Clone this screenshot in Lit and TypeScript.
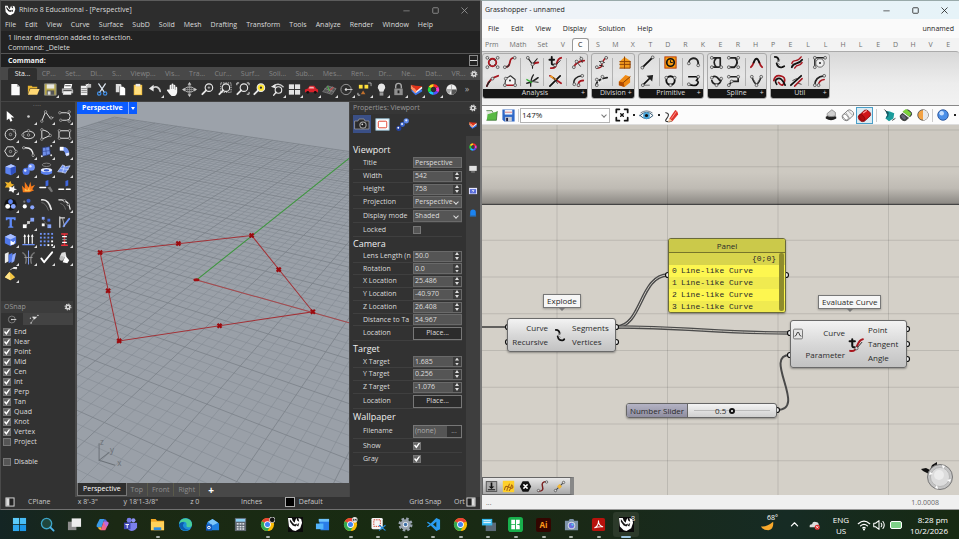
import { LitElement, html, svg, css } from "lit";
import { customElement, state } from "lit/decorators.js";
import { classMap } from "lit/directives/class-map.js";

const base = css`
  :host {
    box-sizing: border-box;
    font-family: "Open Sans", "Noto Sans", sans-serif;
    font-size: 7px;
    line-height: 10px;
  }
  * {
    box-sizing: border-box;
  }
  button,
  input,
  select {
    appearance: none;
    border: 0;
    margin: 0;
    padding: 0;
    background: none;
    border-radius: 0;
    color: inherit;
    font: inherit;
    min-width: 0;
  }
  svg {
    display: block;
    flex: none;
  }
`;

/* ---------- icon drawings, 16 x 16 unless noted ---------- */

const W = "#e8e8e8";
const RED = "#a81820";
const node = (x: number, y: number, c = "#bbb") =>
  svg`<circle cx=${x} cy=${y} r="1.3" fill="#333" stroke=${c} stroke-width=".7"/>`;
const gnode = (x: number, y: number) =>
  svg`<circle cx=${x} cy=${y} r="1.5" fill="#ddd" stroke="#444" stroke-width=".8"/>`;
const line = (d: string, c = W, w = 1) =>
  svg`<path d=${d} fill="none" stroke=${c} stroke-width=${w} stroke-linecap="round" stroke-linejoin="round"/>`;
const fill = (d: string, c = W) => svg`<path d=${d} fill=${c}/>`;
const ball = (x: number, y: number, r: number, c: string) =>
  svg`<circle cx=${x} cy=${y} r=${r} fill=${c}/>`;
const box = (x: number, y: number, w: number, h: number, c: string) =>
  svg`<rect x=${x} y=${y} width=${w} height=${h} fill=${c}/>`;
const lens = (c = "#333") =>
  svg`<circle cx="9.5" cy="6" r="4" fill=${c} stroke=${W} stroke-width="1.2"/><path d="M6.5 9L2.5 13" stroke=${W} stroke-width="2" stroke-linecap="round"/>`;
const wheel = svg`
  <g fill="none" stroke-width="3">
    <path d="M8 3.5A4.5 4.5 0 0 1 11.9 5.8" stroke="#ff2a2a"/>
    <path d="M11.9 5.8A4.5 4.5 0 0 1 11.9 10.2" stroke="#ff37d0"/>
    <path d="M11.9 10.2A4.5 4.5 0 0 1 8 12.5" stroke="#5a4cff"/>
    <path d="M8 12.5A4.5 4.5 0 0 1 4.1 10.2" stroke="#18c6ff"/>
    <path d="M4.1 10.2A4.5 4.5 0 0 1 4.1 5.8" stroke="#22d83a"/>
    <path d="M4.1 5.8A4.5 4.5 0 0 1 8 3.5" stroke="#ffd21c"/>
  </g>`;
const layers = svg`
  <path d="M2 9l5 5 7-4V8z" fill="#3c74e8"/><path d="M2 7l5 5 7-5V5z" fill="#f4f4f4"/>
  <path d="M2 3l5 1 7 .5-6 5z" fill="#e0331a"/><path d="M2 3l6 6.5L7 12 2 7z" fill="#ff8a5c"/>`;
const gear = svg`
  <g fill="none" stroke="#d8d8d8"><circle cx="8" cy="8" r="3.6" stroke-width="2.8"/>
  <circle cx="8" cy="8" r="5.8" stroke-width="2.2" stroke-dasharray="2.5 2.05"/></g>`;
const rhino = svg`
  <path d="M0 1l4 0 1 3 2 2 1-3 1-2 1 3 2 1-1-4 3 1 1 4-2 6-5 3-3-1-4-4z" fill="#fff"/>
  <path d="M2 2l3 4 2 2 3-1-2 3-3-1-3-4zM9 9l3-3-1 4z" fill="#161616"/>`;
const chrome = svg`
  <circle cx="8" cy="8" r="7" fill="#fbbc05"/>
  <path d="M8 8L1.9 4.5A7 7 0 0 1 14.1 4.5z" fill="#ea4335"/><path d="M8 1a7 7 0 0 1 6.3 4H8z" fill="#ea4335"/>
  <path d="M8 8L1.9 4.5A7 7 0 0 0 8 15l3-5.3z" fill="#34a853"/>
  <circle cx="8" cy="8" r="3.6" fill="#fff"/><circle cx="8" cy="8" r="2.7" fill="#4285f4"/>`;
const can = (body: string, top: string, edge: string) => svg`
  <path d="M1.5 8.500L8 2.500q2-1 4 .5l2 2q1 2 0 3.500L8 14q-2 1-4 0l-2-2q-1-2-.5-3.500z" fill=${body} stroke=${edge} stroke-width=".8"/>
  <ellipse cx="5.200" cy="10.300" rx="2.400" ry="4" transform="rotate(-42 5.200 10.300)" fill=${top} stroke=${edge} stroke-width=".6"/>`;

const icons: Record<string, unknown> = {
  rhino, gear, wheel, layers, chrome,
  /* standard toolbar */
  file: svg`${fill("M3.500 2h6l3 3v9h-9z", "#fafafa")}${fill("M9.500 2l3 3h-3z", "#aaa")}`,
  open: svg`${fill("M2 4h4l1 1h5v2H4l-2 6z", "#e8b430")}${fill("M4.500 7.500h10l-2.500 6H2z", "#ffd873")}`,
  save: svg`${box(2, 2, 12, 12, "#b9a94c")}${box(4, 2, 8, 5, "#e9e9e0")}${box(4, 9, 8, 5, "#555")}${box(5, 10, 3, 4, "#ddd")}${line("M2 2h12v12H2z", "#8a8a80")}`,
  print: svg`${fill("M5 2h8l-1 5H4z", "#fff")}${fill("M2 7h11l1 2v3H2z", "#b4b4b4")}${fill("M4 10h8v3.500H3z", "#f2f2f2")}${line("M4 9h8M6 4h5", "#444")}`,
  docprops: svg`${fill("M3 4h7v10H3z", "#eee")}${fill("M8 2h6v4H9z", "#bbb")}${line("M4 7h5M4 9h5M4 11h5", "#888")}${line("M8 5l3-3", "#fff")}`,
  cut: svg`${line("M4 2l6 9M11 2L5 11", "#dfe8f2", 1.3)}<circle cx="4.500" cy="12.300" r="1.800" fill="none" stroke="#3f8be0" stroke-width="1.300"/><circle cx="10.800" cy="12.300" r="1.800" fill="none" stroke="#3f8be0" stroke-width="1.300"/>`,
  copy: svg`${fill("M3 2h5l1 1v8H3z", "#ddd")}${fill("M7 5h4l2 2v7H7z", "#fff")}${line("M7 5v9", "#555", 0.7)}`,
  paste: svg`${box(4, 3, 9, 11, "#f3c244")}${box(6, 2, 5, 3, "#e9e9e9")}${box(5, 5, 7, 8, "#ffdf80")}`,
  undo: svg`${line("M4 7c4-3 8-2 9 3", "#ccc", 1.8)}${fill("M1 7l5-4v7z")}`,
  hand: svg`${fill("M5 8V4q0-1 1-1t1 1V2.500q0-1 1-1t1 1V4q0-1 1-1t1 1v2q0-1 1-1t1 1v5q-1 4-3 4H7Q5 13 2 9q0-1.500 1.500-1z", "#f6f6f6")}${line("M7 4v3M9 4v3M11 5v3", "#777", 0.6)}`,
  orbit: svg`${line("M8 2v12M2 8h12", "#999", 0.800)}<ellipse cx="8" cy="8" rx="5" ry="2.500" fill="none" stroke="#bbb"/>${fill("M8 0l2 3H6zM8 16l2-3H6zM0 8l3-2v4zM16 8l-3-2v4z", "#ccc")}<ellipse cx="8" cy="8" rx="2" ry="5" fill="none" stroke="#999" stroke-width=".7"/>`,
  zoom: svg`${lens()}${line("M8.500 6h2M9.500 5v2", "#ccc", 0.7)}`,
  zoomwin: svg`<rect x="4" y="1" width="11" height="10" fill="none" stroke="#ccc" stroke-dasharray="1.500 1"/>${lens()}`,
  zoomext: svg`${lens()}${line("M13 1h2v2M15 11v2h-2M4 1H2v2", W)}`,
  zoomsel: svg`${lens("#ffe52e")}${ball(9.5, 6, 1.2, "#333")}`,
  viewundo: svg`<circle cx="9" cy="8.500" r="3.500" fill="none" stroke=${W} stroke-width="1.200"/>${line("M6.500 11L4 14", W, 1.6)}${line("M4 4c3-2 7-2 10 1", "#ccc", 1.5)}${fill("M1 5l5-3v5z")}`,
  four: svg`${box(2, 2.500, 5.500, 5, "#e4e4e4")}${box(8.500, 2.500, 5.500, 5, "#e4e4e4")}${box(2, 8.500, 5.500, 5, "#e4e4e4")}${box(8.500, 8.500, 5.500, 5, "#e4e4e4")}`,
  car: svg`${fill("M1 8l3-1 2-3h5l2 3 2 1v3H1z", "#d8202a")}${fill("M6 5h4l1 2H5z", "#f3b3b3")}${ball(4, 11, 1.5, "#111")}${ball(12, 11, 1.5, "#111")}`,
  plane: svg`${fill("M1 10l5-6 9 3-4 6z", "#555")}${line("M1 10l5-6 9 3-4 6zM3 7l9 3M6 11l5-6M8 12l4-6", "#9a9a9a", 0.6)}${line("M8 9l4-3", "#d33")}${line("M8 9L6 5", "#4c4")}`,
  circ: svg`<circle cx="7.500" cy="8" r="5.500" fill="none" stroke="#999"/>${ball(7.5, 8, 1.3, W)}${line("M8 8h6", "#ccc")}`,
  shapes: svg`${box(2, 3, 4, 4, "#ffdf3c")}${box(8, 3, 4, 4, "#ffdf3c")}${fill("M4 13l2.500-4 2.500 4z", "#c0702c")}${line("M12 1h3v3", "#ccc", 0.800)}${line("M1 12v2h2", "#ccc")}`,
  bulb: svg`${fill("M8 1.500a4 4 0 0 1 3 6.500l-1 2.500H6L5 8a4 4 0 0 1 3-6.500z", "#e6e6e6")}${box(6, 11, 4, 3.5, "#9a9a9a")}`,
  lock: svg`<path d="M5 7V4.500a3 3 0 0 1 6 0V7" fill="none" stroke="#aaa" stroke-width="1.500"/>${box(3.5, 7, 9, 7, "#8f8f8f")}${box(7, 9, 2, 3, "#222")}`,
  sphere: svg`<circle cx="8" cy="8" r="5.500" fill="#eee"/>${fill("M8 8v5.500a5.500 5.500 0 0 0 5.500-5.500z", "#555")}${fill("M8 8H2.500a5.500 5.500 0 0 0 3 5z", "#aaa")}${line("M3 8h10M8 3v10", "#999", 0.7)}`,
  /* left palette */
  arrow: svg`${fill("M4 2v10l2.500-2L8 13.500l2-1L8.500 9H12z", "#fff")}`,
  point: svg`${ball(8, 8, 1.4, "#ccc")}`,
  pline: svg`${line("M3 13L7 3l5 7 3-1")}${node(3, 13)}${node(7, 3)}${node(13, 9.500)}`,
  cv: svg`${line("M4 4h6q4 0 4 4t-4 4H6")}${node(3, 4)}${node(13, 3)}${node(13, 13)}${node(4, 12)}`,
  circle: svg`<circle cx="8" cy="8" r="5.700" fill="none" stroke=${W}/>${node(8, 8)}${node(12, 4)}`,
  ellipse: svg`<ellipse cx="8" cy="8.500" rx="6.500" ry="4" fill="none" stroke=${W}/>${node(8, 4)}${node(8, 8.500)}${node(2, 8.500)}`,
  arc: svg`${line("M3 2v11M3 13l9-4M3 3q8 1 9 6")}${node(3, 3)}${node(3, 13)}${node(12, 9)}`,
  rect: svg`${line("M2.500 4h11v8h-11z")}${node(2.5, 4)}${node(13.5, 4)}${node(2.5, 12)}${node(13.5, 12)}`,
  hex: svg`${line("M5 3h6l3 5-3 5H5L2 8z")}${node(8, 8)}${node(14, 8)}`,
  fillet: svg`${line("M2 4h3q8 0 8 9", W, 1.4)}${node(3, 4)}${node(13, 12)}`,
  patch: svg`${fill("M4 4l7-1 1 8-8 2z", "#6f8fe8")}${line("M4 4l7-1 1 8-8 2zM7 3l1 9M4 8l8-1", "#2b3f8f", 0.6)}${ball(13, 2, 1, W)}${ball(3, 13, 1, W)}${ball(13, 12, 1, W)}`,
  sweep: svg`${fill("M3 4q8-3 10 5l-4 3q0-6-6-5z", "#7090ec")}${fill("M3 3h4v4H3z", "#fff")}${fill("M9 10l4-1v3l-3 1z", "#dfe6ff")}`,
  cube: svg`${fill("M2.500 5l6-2.500 5 2v6.500l-5 3-6-2z", "#5c82f0")}${fill("M2.500 5l6-2.500 5 2-5.500 2z", "#b4c6ff")}${fill("M8 6.500l5.500-2v6.500l-5 3z", "#2f4fbe")}`,
  balls: svg`${ball(5.5, 10, 3.8, "#4f74e4")}${ball(11, 5.5, 3.8, "#6f92f6")}${ball(4.5, 9, 1.3, "#dfe6ff")}${ball(10, 4.5, 1.3, "#dfe6ff")}`,
  tube: svg`<ellipse cx="8" cy="3" rx="4.500" ry="1.800" fill="none" stroke="#888"/>${fill("M2 8h12v4q-6 3.500-12 0z", "#5c82f0")}<ellipse cx="8" cy="8.500" rx="6" ry="2.200" fill="#e8eeff"/><ellipse cx="8" cy="9" rx="3" ry="1.200" fill="#3354c4"/>`,
  mesh: svg`${fill("M1 10l5-7 3 2 5-1-5 8-3-1z", "#7292ee")}${line("M1 10l5-7 3 2 5-1-5 8-3-1zM4 7l8 1M8 4l-2 7", "#dce5ff", 0.7)}`,
  puzzle: svg`${fill("M2 3l4 1 2-2 1 3 3 1-3 2-1 3-2-2-4 0 2-3z", "#f0b429")}${fill("M7 8l3 1 2-2 0 3 3 1-3 1-1 3-2-2-3 0 1-2z", "#fafafa")}`,
  burst: svg`${fill("M2 14L1 7l3 3 0-7 4 6 2-6 1 5 4-2-3 5 2 1-5 2z", "#f47a1c")}${fill("M4 13l0-3 3 2 2-4 0 4 3-1-3 2z", "#ffc04c")}`,
  trim: svg`${fill("M7 2l3-1v6l-3 1z", "#3f66dc")}${line("M1 9h6", "#fff", 1.6)}${fill("M9 9l3-1 3 5-2 1z", "#777")}`,
  split: svg`${fill("M9 2l3-1v6l-3 1z", "#3f66dc")}${line("M2 11h5M10 11h4", "#fff", 1.6)}`,
  group: svg`${ball(8, 8, 6.5, "#111")}${ball(8, 5, 2.6, "#5a80ee")}${ball(5, 10, 2.6, "#fff")}${ball(11, 10, 2.6, "#8aa6ff")}`,
  ungroup: svg`${ball(8, 4, 2.2, "#3b5ac4")}${ball(4, 10, 2.2, "#fff")}${ball(12, 11, 2.2, "#8aa6ff")}${ball(3.5, 5, 1.2, "#777")}`,
  bend: svg`${line("M3 3q7-1 10 10", W, 1.8)}${line("M3 6q4 0 7 8", "#888", 0.7)}`,
  bend2: svg`${line("M2 3h3q8 1 9 10", W, 1.4)}${line("M4 7q4 1 5 6", "#888", 0.7)}${node(8, 4)}${node(12, 8)}`,
  text: svg`${fill("M3 2.500h10.500v3h-1.500l-.5-1H9.500V12l1.500.5v1H5.500v-1L7 12V4.500H5l-.5 1H3z", "#5f8af8")}`,
  move: svg`${line("M4 12l8-7", "#999", 0.8)}${box(2, 10, 4, 4, "#fff")}${box(10, 3, 4, 4, "#88a5f8")}${box(6.5, 6.5, 3, 3, "#ccc")}`,
  pts: svg`${box(3, 2, 3, 3, "#88a5f8")}${box(9, 4, 3, 3, "#4267d8")}${box(3, 9, 3, 3, "#fff")}${box(9, 10, 4, 4, "#88a5f8")}${line("M4 5l6 7", "#777", 0.6)}`,
  flow: svg`${line("M3 2v11M3 3h5", "#ddd", 1.3)}${line("M7 12l6-8", "#6d91f5", 2)}${line("M6 4l2 8", "#ccc", 0.8)}`,
  block: svg`${fill("M2 5l6-3 6 3v7l-6 3-6-3z", "#5078ea")}${fill("M2 5l6-3 6 3-6 3z", "#a9beff")}${fill("M8 9l3 2 2-2-1 4-4 1z", "#fff")}`,
  up3: svg`${line("M4 12V4M8 12V4M12 12V4", "#fff", 1.2)}${fill("M2.500 5L4 2l1.500 3zM6.500 5L8 2l1.500 3zM10.500 5L12 2l1.500 3z", "#fff")}${line("M2 13.500h12", "#6d91f5", 1.5)}`,
  array: svg`${[2, 6, 10, 14].map((y) => [2, 6, 10, 14].map((x) => box(x - 1, y - 1, 2, 2, x + y > 20 ? "#fff" : "#6f92f6")))}`,
  dim: svg`${line("M5 2h6M5 14h6M8 3v10", "#e8303a", 1.6)}${line("M6 5h4M6 11h4", "#fff", 1.4)}${line("M6 8h4", "#999")}`,
  planes: svg`${fill("M2 4l4-2v10l-4 2z", "#e8e8e8")}${fill("M6 5l4-2v9l-4 2z", "#4f77ea")}${fill("M10 5l4-2-2 9-3 2z", "#8fa9fb")}`,
  mirror: svg`${line("M8 1v14", "#7d9cf6")}${line("M2 3q5 3 3 11M14 3q-5 3-3 11", "#777", 1.6)}${line("M4 8h8", "#aaa", 0.8)}`,
  check: svg`${line("M2.500 9l3 4L14 2.500", "#fff", 2)}`,
  solids: svg`${fill("M5 3l4-1 1 5-4 2-3-2z", "#ddd")}${fill("M9 6l4 5-2 3-5-1z", "#fff")}${ball(5, 9, 2.5, "#bbb")}`,
  cone: svg`${fill("M7 5l6 6-5 3-6-3z", "#f3c544")}${fill("M7 5l1 9-6-3z", "#ffe48a")}${line("M8 3q2-3 6-1", "#ccc")}${box(11, 0, 4, 2, "#eee")}`,
  end: svg`<circle cx="7" cy="8" r="5" fill="none" stroke="#999"/>${line("M7 8h6", "#ddd", 1.2)}${ball(7, 8, 1.2, "#ddd")}`,
  filter: svg`${line("M3 13l4-6V4", "#aaa")}${fill("M4 4h8L8 8z", "#ddd")}${ball(13, 2, 1, W)}${ball(3, 13, 1, W)}${ball(2, 6, 0.8, W)}`,
  /* properties */
  camera: svg`${fill("M1 5h3l1-2h5l1 2h4v8H1z", "#2b2b2b")}${line("M1 5h3l1-2h5l1 2h4v8H1z", "#999", 0.8)}${ball(9, 9, 3.6, "#aaa")}${ball(9, 9, 2.6, "#222")}${ball(8.3, 8.300, 0.9, "#ddd")}`,
  frame: svg`<rect x="1" y="2" width="14" height="12" fill="#fff" stroke="#a7d4ea"/><rect x="3.500" y="4.500" width="9" height="7" rx="1" fill="#fff" stroke="#e0402c"/>`,
  material: svg`${ball(4, 12, 2.8, "#24419c")}${ball(8, 8, 2.6, "#3c66d0")}${ball(12, 4, 2.800, "#5b86e8")}${ball(3.500, 11.500, 1, "#fff")}${ball(7.500, 7.500, 1, "#fff")}${ball(12, 3.500, 1.200, "#e4edff")}`,
  screen: svg`${box(2, 3, 12, 8, "#e2e2e2")}${box(5, 12, 6, 1.5, "#999")}`,
  help: svg`${box(1.500, 3, 13, 10, "#e8e8ff")}${box(3, 5, 10, 7, "#5468d8")}${line("M6.500 7.500q1.500-2 3 0l-1.500 2", "#fff", 1.2)}`,
  bell: svg`${fill("M3.500 12V7a4.500 4.500 0 0 1 9 0v5z", "#1b84f2")}${box(3, 12, 10, 1.5, "#1b84f2")}`,
  /* component tabs */
  g1: svg`<circle cx="8" cy="8" r="4" fill="none" stroke=${RED} stroke-width="2"/>${line("M3 3l3 3M13 3l-3 3M3 13l3-3M13 13l-3-3", "#444", 0.8)}${gnode(2.5, 3)}${gnode(13.5, 3)}${gnode(2.5, 13)}${gnode(13.5, 13)}`,
  g2: svg`${fill("M3 13l1-7 5-3 5 4v6z", "#f2f2f2")}${line("M3 13l1-7 5-3 5 4v6", "#333", 1.2)}${line("M3 13h11", RED, 1.6)}${ball(8.500, 8, 1, "#222")}${gnode(3, 13)}${gnode(14, 13)}${gnode(4, 6)}`,
  g3: svg`${line("M2 14Q4 6 14 3", RED, 2)}${line("M2 14q1-3 3-5", "#222", 1.6)}${gnode(8, 6)}`,
  g4: svg`${line("M3 13C12 13 5 3 13 3", RED, 2)}${line("M3 13q4 0 4.500-3", "#333", 1.2)}${gnode(3, 13)}${gnode(13.5, 3)}`,
  g5: svg`${line("M8 10q3-2 6-2", RED, 2.2)}${line("M3 3l5 7v4M8 10l5-6", "#222", 1.2)}${gnode(3, 3)}${gnode(8, 10)}`,
  g6: svg`${line("M2 11q6-1 12-6", "#222", 1.6)}${line("M6 14Q6 6 9 2", "#222", 1.4)}${line("M2 7l5 3", "#3ab43a", 1.4)}${line("M8 9l6 1", "#555", 1.2)}`,
  g7: svg`${line("M4 2v7q0 2 3 1M1.500 5h5", "#111", 2)}${line("M3 14c9 1 4-10 11-11", RED, 2)}${line("M6 13l7-7", "#222", 1)}${gnode(7.5, 11)}`,
  g8: svg`${line("M2 3l12 8", RED, 1.8)}${line("M2 14L13 3", "#111", 1.8)}${line("M3 3.500l5 3.500", "#f0a020", 1.8)}${line("M6 5l4 6", "#222", 1)}`,
  g9: svg`${line("M3 13q2-6 11-7", RED, 2)}${line("M5 6l5 6M10 2l2 6", "#222", 0.9)}${gnode(6, 7)}${gnode(3, 13)}${gnode(11, 4)}`,
  g10: svg`${line("M3 12q-1-8 9-9", "#222", 1.5)}${line("M8 14q-1-6 5-6", RED, 2)}${gnode(3.5, 12)}${gnode(12, 3)}${gnode(8, 13)}`,
  g11: svg`${line("M3 14c8 0 4-4 6-6s0-4 5-5", RED, 1.6)}${line("M6 11l4 1M6 7l5 1", "#222", 1.2)}${gnode(3, 13)}${gnode(8.500, 8)}${gnode(13, 3)}`,
  g12: svg`${line("M2 13q2-7 12-8", "#222", 2)}${line("M4 8l2 3M8 5l1 4", "#eee", 1.4)}${gnode(3, 7)}${gnode(3, 13)}${gnode(9, 4)}`,
  g13: svg`${fill("M3 7l5-5 6 4v8H3z", "#f39a1c")}${line("M3 7h11M3 10h11M3 14h11V7M8 2v12", "#8a4005", 1)}`,
  g14: svg`${fill("M2 9l7-7 5 2v6l-6 5-6-2z", "#f08a14")}${fill("M2 9l5 1 1 5-6-2z", "#b04c05")}${line("M7 10l7-6", "#7a3a05")}`,
  g15: svg`${line("M3 13L13 3", "#111", 2)}${gnode(2.5, 13.5)}${gnode(13.5, 2.500)}`,
  g16: svg`${line("M3 13L12 4", "#111", 1.8)}${fill("M7 3l7-1-1 7z", "#222")}${line("M2 13h8", "#444", 0.8)}${gnode(3, 13)}`,
  g17: svg`${box(2, 2, 12, 12, "#f59a0e")}<rect x="2" y="2" width="12" height="12" fill="none" stroke="#b83a08"/><circle cx="8" cy="8" r="4" fill="none" stroke="#111" stroke-width="1.800"/>${line("M8 6v2h2", "#111")}`,
  g18: svg`<circle cx="8" cy="8" r="4.500" fill="none" stroke="#111" stroke-width="2"/>${gnode(3.5, 5)}${gnode(12.5, 5)}${gnode(8, 13)}`,
  g19: svg`${line("M3 9a5 5 0 0 1 10-1v3", "#222", 2)}${gnode(3, 9)}${gnode(13, 11)}`,
  g20: svg`${line("M3 4h8q3 1 0 4q4 1 0 5-4 1-8-1", "#111", 1.8)}${gnode(3, 12)}${gnode(13, 4)}`,
  g21: svg`${line("M4 3h8M4 13h9M8 3q-5 5 0 10M12 3v10", "#222", 1.8)}${gnode(3, 13)}${gnode(13, 13)}${gnode(3, 3)}`,
  g22: svg`${line("M3 5q4-3 7 1t3 1q-1 5-5 5T3 8", "#222", 1.8)}${gnode(3, 5)}${gnode(13, 6)}${gnode(8, 13)}`,
  g23: svg`${line("M4 3h6q4 5-1 10H4", "#222", 2)}${gnode(3, 3)}${gnode(13, 3)}${gnode(3, 13)}${gnode(13, 13)}`,
  g24: svg`${line("M3 4h10v5H6l-3 4", "#222", 1.800)}${gnode(3, 4)}${gnode(13, 4)}${gnode(3, 13)}${gnode(6, 9)}`,
  g25: svg`${line("M2 13q2-2 3-5M14 13q-2-2-3-5", RED, 2)}${line("M5 8Q8 0 11 8", "#111", 2)}`,
  g26: svg`${line("M3 4q3 8 5 8t5-8", "#222", 1.700)}${line("M3 4l5 8 5-8", "#666", 0.800)}${gnode(3, 4)}${gnode(13, 4)}${gnode(8, 13)}`,
  g27: svg`${line("M3 2q4 0 4 4M5 9q1 5 6 4l2-1", "#111", 2)}${line("M8 5l-3 3 3 2", "#777", 0.9)}`,
  g28: svg`${line("M3 13q1-3 5-4t6-4", "#111", 2)}${line("M3 9q1-3 4-3t6-4M6 14q2-3 4-3t4-3", RED, 1.500)}`,
  g29: svg`${line("M2 8q1-6 7-5t4 7-6 0", RED, 1.900)}${line("M5 12q-3-4 1-6t8 7", "#111", 1.800)}`,
  g30: svg`${line("M2 13L13 3", "#111", 1.900)}${line("M6 14L14 6", RED, 1.600)}${line("M4 8l4-2M10 11l3 1", "#444")}`,
  g31: svg`${line("M3 3h11M3 3v10", "#222", 1.5)}<circle cx="8.500" cy="8.500" r="4.500" fill="#eee" stroke="#555" stroke-width=".9"/>${ball(8.5, 8.500, 1, "#111")}${gnode(3, 3)}${gnode(3, 13)}${gnode(14, 3)}`,
  g32: svg`${line("M3 13Q3 4 13 3", "#222", 1.900)}${line("M7 13q0-5 6-6", RED, 1.600)}${gnode(3, 13)}${gnode(13, 3)}${gnode(7, 13)}`,
  /* node glyphs */
  explode: svg`${line("M3 2q4 0 4 4", "#111", 1.9)}${line("M5 9q1 5 6 4l1-1", "#111", 1.900)}${line("M8 5l-3 3 3 2", "#888", 0.800)}`,
  evalc: svg`${line("M4 3v6q0 2 2 1.500M1.500 5h5", "#111", 1.900)}${line("M2 14c8 2 5-10 12-11", RED, 1.900)}${line("M7 13l6-7", "#222", 0.900)}<circle cx="8" cy="11.500" r="1.500" fill="#ddd" stroke="#444" stroke-width=".7"/>`,
  bump: svg`<rect x="2" y="1.500" width="12" height="13" rx="1.500" fill="#e4e4e4" stroke="#555"/>${line("M4 11Q6 11 7 6h2q1 5 3 5", "#333", 1.200)}`,
  /* canvas toolbar */
  gopen: svg`${fill("M2 3h6l1 2h4v9H2z", "#e4e8e0")}${fill("M3 7l11-3-1 10H2z", "#58b944")}${line("M2 3h6l1 2M2 14h11l1-10", "#2f6a28", 0.800)}`,
  gsave: svg`${fill("M1.500 1.500h13v13h-11l-2-2z", "#3069c8")}${box(4, 2, 8, 5, "#eef2f8")}${box(4.500, 9.500, 7, 5, "#c8cdd6")}${box(5.5, 10.500, 2, 3.500, "#224")}${box(4, 4, 8, 1, "#e08080")}`,
  extents: svg`${line("M1.500 5V1.500H5M11 1.500h3.500V5M14.500 11v3.500H11M5 14.500H1.500V11", "#111", 2)}${line("M6.500 6.500l3 3M9.500 6.500l-3 3", "#111", 1.600)}`,
  eye: svg`${line("M1 8q7-7 14 0-7 7-14 0z", "#26506e", 1)}${ball(8, 8, 3.6, "#49a7dc")}${ball(8, 8, 1.700, "#111")}${line("M2 5q6-4 12 0", "#456", 0.800)}`,
  sketch: svg`${line("M2 5q5 1 1 6t5 3", "#333", 1.200)}${fill("M6 11L12 2q3 1 3 5l-6 7-4 0z", "#e0342c")}${fill("M6 11l-2 4 5-1z", "#f2c9a0")}${line("M8 11l5-7", "#ff9a90", 1)}`,
  ghost: svg`${fill("M2 10q6-4 12 0v2q-6 4-12 0z", "#222")}${fill("M4 6l5-4 4 3v4q-5 2-9 0z", "#cfcfcf")}${line("M4 6l5-4 4 3v4q-5 2-9 0z", "#777", 0.800)}`,
  wirecan: svg`${can("#f4f4f4", "#fff", "#555")}${line("M8 3l5 5M6 6l4 6", "#777", 0.700)}`,
  redcan: svg`${can("#d0161a", "#b00c10", "#7a0508")}${line("M7 5l3-2", "#ff9a9a", 1.400)}`,
  tealcan: svg`${fill("M4 3l5 1 5 2-1 6-5 3-4-3 2-4z", "#1b9c9c")}${fill("M4 3l4 2-1 5-3 2 2-4z", "#14606c")}${line("M3 2l3 3M12 14l3-2", "#333", 1)}`,
  greencan: svg`${can("#4a5a4a", "#667", "#222")}${fill("M4 4l4-3 6 5-2 4z", "#7bd43a")}${line("M4 5l8 6", "#fff", 1.200)}`,
  half: svg`<circle cx="8" cy="8" r="6" fill="#f3a242" stroke="#555"/>${fill("M8 2a6 6 0 0 1 0 12z", "#e8e8e8")}`,
  bluesphere: svg`<circle cx="8" cy="8" r="6" fill="#4b8fe8" stroke="#234f96"/>${ball(6.500, 6, 2.600, "#c5dfff")}`,
  b1: svg`<rect x="1.500" y="2" width="13" height="12" fill="#aaa" stroke="#444"/>${fill("M8 11L4.500 8H7V3h2v5h2.500z", "#111")}${line("M4 12h8", "#111", 1.300)}`,
  b2: svg`${box(1, 1, 14, 14, "#ffd02a")}${line("M3 12q1-5 3-4t3-3M6 13q1-5 3-4t3-3M9 13q1-3 3-3t1-3", "#a86410", 1.300)}`,
  b3: svg`${fill("M4.500 1.500h7L15 8l-3.500 6.500h-7L1 8z", "#111")}${line("M6 6l4 4M10 6l-4 4", "#fff", 1.800)}`,
  b4: svg`${line("M3 14q7 0 5-6t5-6", "#7a2020", 1.800)}${gnode(3, 13)}${gnode(13, 2.500)}`,
  b5: svg`${line("M3 13L13 3", "#444", 1.400)}${fill("M8 5l3 3-3 3-3-3z", "#f2b632")}${gnode(3, 13)}${gnode(13, 3)}`,
  /* taskbar */
  windows: svg`${box(1, 1, 6.600, 6.600, "#5ccbfb")}${box(8.400, 1, 6.600, 6.600, "#48bdf6")}${box(1, 8.400, 6.600, 6.600, "#2fa8ee")}${box(8.400, 8.400, 6.600, 6.600, "#1c96e6")}`,
  search: svg`<circle cx="7" cy="7" r="5.500" fill="#20463c" stroke="#3ea6c8" stroke-width="1.400"/>${line("M11 11l3.500 3.500", "#4cb4ea", 2)}`,
  task: svg`${box(1, 5, 9, 9, "#8d8d8d")}${box(5, 1.500, 10, 9, "#ededed")}`,
  copilot: svg`${fill("M5 2h5l-3 9H3q-2 0-1-3z", "#3a9be8")}${fill("M10 2q2 0 3 3l-4 1z", "#5468e0")}${fill("M11 14H6l3-9h4q2 0 1 3z", "#f0648c")}${fill("M6 14q-2 0-3-3h4z", "#f6b63a")}${fill("M9 5h4q2 0 1 3l-2 3z", "#b96ae0")}`,
  teams: svg`${ball(11, 3.500, 2.300, "#8f94f4")}${ball(6.500, 3.500, 2.600, "#767be8")}${fill("M4 6h11v5q-2 4-6 4-4-1-5-4z", "#7b80ee")}${box(1, 6, 7, 7, "#4148b8")}${line("M3 8h3M4.500 8v3.500", "#fff", 1)}`,
  folder: svg`${fill("M1 2h5l1.500 2H15v10H1z", "#f2a824")}${box(1, 5, 14, 9, "#ffd25a")}${box(4, 11, 8, 3, "#2f8ee0")}`,
  edge: svg`${ball(8, 8, 7, "#1d8fd8")}${fill("M1.500 6a7 7 0 0 1 13.500 2q0 3-4 3-2 0-2-1.500Q10 5 6 5 3 5 1.500 8z", "#48cf9a")}${fill("M1 8q2-4 6-2-3 2-1 5 2 3 6 2a7 7 0 0 1-11-5z", "#0c5cae")}`,
  outlook: svg`${fill("M2 6l6-4 7 5v7H3z", "#1f7fe0")}${fill("M3 5l5-3 6 4-6 3z", "#7cc6fa")}${box(1, 8, 6.500, 6.500, "#1257b8")}${ball(4.200, 11.200, 1.800, "#fff")}${ball(4.200, 11.200, 0.900, "#1257b8")}`,
  calc: svg`${box(2, 1, 12, 14, "#5d6670")}${box(3, 2, 10, 3, "#8cd0f4")}${[7, 10, 12.500].map((y) => [4, 7, 10].map((x) => box(x, y - 0.500, 2, 1.600, "#e4e8ec")))}`,
  chromeA: svg`${chrome}<circle cx="13" cy="3" r="3" fill="#111" stroke="#eee" stroke-width=".8"/>`,
  rhinoB: svg`${box(0, 0, 16, 16, "#0b0b0b")}${rhino}`,
  remote: svg`${fill("M4 2h11v12H6z", "#2a7de8")}${fill("M1 7h8v6H1z", "#52b4fa")}${box(4, 2, 11, 3, "#6fc3fb")}`,
  chromeB: svg`${chrome}<circle cx="12.500" cy="3" r="3" fill="#e8e8e8"/>${line("M11 4V2l1.500 1.500L14 2v2", "#222", 0.800)}`,
  snip: svg`<rect x="0.500" y="1" width="12" height="12" rx="1.500" fill="#f5f5f5"/><rect x="3" y="3" width="7" height="7" fill="none" stroke="#d23a2a" stroke-dasharray="1.500 1"/>${line("M9 9l6 5M15 9l-6 5", "#2a8de0", 1.300)}`,
  settings: svg`<circle cx="8" cy="8" r="6" fill="none" stroke="#9aa4b0" stroke-width="3" stroke-dasharray="2.600 2.100"/>${ball(8, 8, 5.500, "#98a2ae")}${ball(8, 8, 2.800, "#e7ecf2")}${ball(8, 8, 1.800, "#3a6ea8")}`,
  vscode: svg`${fill("M11 1l4 2v10l-4 2-6-6-3 2-1-1 3-2-3-2 1-1 3 2z", "#2a9cf0")}${fill("M11 5v6L7.500 8z", "#18301a")}`,
  keyb: svg`${box(5, 6, 11, 9, "#5b6a78")}${box(1, 2, 11, 7, "#37b9ee")}${line("M3 4h7M3 6h7", "#fff", 1)}`,
  green: svg`<rect x="0" y="0" width="16" height="16" rx="3" fill="#18b04c"/>${fill("M3.500 3h4v10h-4zM8.500 3h4v4l-2 1 2 1v4h-4z", "#fff")}${line("M3.500 8h4M10 8h3", "#18b04c", 0.800)}`,
  photo: svg`${fill("M1 4h4l1-2h4l1 2h4v10H1z", "#7d93a8")}${ball(8, 9, 4, "#d8dde4")}${ball(8, 9, 3, "#6a6ee0")}${ball(9, 8, 1.200, "#58d0e8")}`,
  acrobat: svg`<rect x="1" y="1" width="14" height="14" rx="2" fill="#b8120c"/>${line("M4 11.500q4-2 4-7.500 0 5 4.500 6.500-4.500-.5-8.500 1z", "#fff", 1.100)}`,
  moon: svg`${fill("M1 10q6 1 13-5 1 8-5 9-6 0-8-4z", "#f8a92c")}`,
  cloud: svg`${fill("M1 11q-1-4 3-4 1-4 5-3 4 0 4 4 2 1 0 3z", "#dcdcdc")}${ball(11, 11, 3.400, "#dd2c2c")}${line("M9.800 9.800l2.400 2.400M12.200 9.800l-2.400 2.400", "#fff", 1)}`,
  wifi: svg`${line("M1.500 6.500q6.500-6 13 0M4 9q4-3.500 8 0M6.500 11.300q1.500-1.300 3 0", "#fff", 1.400)}${ball(8, 13, 1.200, "#fff")}`,
  sound: svg`${line("M2 6h2l4-3v10L4 10H2z", "#fff", 1.200)}${line("M10.500 6q1.500 2 0 4M12.500 4q3 4 0 8", "#fff", 1.200)}`,
  up: svg`${line("M3.500 10L8 5.500l4.500 4.500", "#fff", 1.700)}`,
  min: svg`${line("M4 8.500h8", "currentColor", 1)}`,
  max: svg`<rect x="4" y="4" width="8" height="8" rx="1" fill="none" stroke="currentColor" stroke-width="1.200"/>`,
  close: svg`${line("M4 4l8 8M12 4l-8 8", "currentColor", 1.200)}`,
  dockl: svg`<rect x="1.500" y="1.500" width="13" height="13" fill="#222" stroke="#ddd" stroke-width="1.500"/>${box(2, 2, 5, 12, "#ddd")}`,
  dockr: svg`<rect x="1.500" y="1.500" width="13" height="13" fill="#222" stroke="#ddd" stroke-width="1.500"/>${box(9, 2, 5, 12, "#ddd")}`,
};

const icon = (name: string, size = 16) =>
  html`<svg viewBox="0 0 16 16" width=${size} height=${size} aria-hidden="true">${icons[name]}</svg>`;

/* ---------- perspective ground grid ---------- */

const VIEW = { w: 271, h: 380, focal: 564 };
const CAM = [25.486, -40.97, 26.408];
const FWD = [-0.433, 0.75, -0.5];
const RIGHT = [0.866, 0.5, 0];
const UP = [-0.25, 0.433, 0.866];
type P3 = [number, number];

const depthOf = ([x, y]: P3) =>
  (x - CAM[0]) * FWD[0] + (y - CAM[1]) * FWD[1] - CAM[2] * FWD[2];
function project([x, y]: P3): string {
  const v = [x - CAM[0], y - CAM[1], -CAM[2]];
  const dot = (a: number[]) => a[0] * v[0] + a[1] * v[1] + a[2] * v[2];
  const d = dot(FWD);
  const sx = VIEW.w / 2 + (VIEW.focal * dot(RIGHT)) / d;
  const sy = VIEW.h / 2 - (VIEW.focal * dot(UP)) / d;
  return `${sx.toFixed(1)} ${sy.toFixed(1)}`;
}
function segment(a: P3, b: P3): string {
  const near = 4;
  let da = depthOf(a);
  let db = depthOf(b);
  if (da < near && db < near) return "";
  const cut = (p: P3, q: P3, dp: number, dq: number): P3 => {
    const t = (near - dp) / (dq - dp);
    return [p[0] + (q[0] - p[0]) * t, p[1] + (q[1] - p[1]) * t];
  };
  if (da < near) a = cut(a, b, da, db);
  else if (db < near) b = cut(b, a, db, da);
  return `M${project(a)}L${project(b)}`;
}
const EXTENT = 50;
let minor = "";
let major = "";
for (let i = -EXTENT; i <= EXTENT; i++) {
  const both = segment([i, -EXTENT], [i, EXTENT]) + segment([-EXTENT, i], [EXTENT, i]);
  if (i % 5 === 0) major += both;
  else minor += both;
}
const ground =
  "M" + [[-EXTENT, EXTENT], [EXTENT, EXTENT]].map((p) => project(p as P3)).join("L") +
  `L${VIEW.w * 3} ${VIEW.h * 2}L${-VIEW.w * 2} ${VIEW.h * 2}L${project([-EXTENT, -20])}Z`;

const marks: P3[] = [
  [23, 150], [101, 141], [174, 133], [201, 167], [235, 209], [142, 223], [42, 238], [31, 188],
];

/* ---------- Rhino window ---------- */

const rhinoMenus = ["File", "Edit", "View", "Curve", "Surface", "SubD", "Solid", "Mesh", "Drafting",
  "Transform", "Tools", "Analyze", "Render", "Window", "Help"];
const rhinoTabs = ["Sta...", "CP...", "Set...", "Di...", "S...", "Viewp...", "Vis...", "Tra...", "Cur...",
  "Surf...", "Soli...", "Sub...", "Mes...", "Ren...", "Dr...", "Ne...", "Dat...", "VR..."];
const rhinoTools = ["file", "open", "save*", "print", "docprops", "cut", "copy", "paste", "undo*", "hand",
  "orbit", "zoom", "zoomwin", "zoomext", "zoomsel", "viewundo*", "four*", "car*", "plane*", "circ*",
  "shapes*", "bulb*", "lock*", "layers*", "wheel*", "sphere"];
const palette = ["arrow", "point*", "pline*", "cv*", "circle*", "ellipse*", "arc*", "rect*", "hex*",
  "fillet*", "patch*", "sweep*", "cube*", "balls*", "tube*", "mesh*", "puzzle*", "burst", "trim", "split",
  "group*", "ungroup", "bend", "bend2*", "text", "move*", "pts", "flow", "block*", "up3*", "array*", "dim*",
  "planes*", "mirror*", "check*", "solids*", "cone*"];
const snaps = ["End", "Near", "Point", "Mid", "Cen", "Int", "Perp", "Tan", "Quad", "Knot", "Vertex"];

type Row = [label: string, kind: string, value: string, size: string];
const sections: { title: string; size: string; rows: Row[] }[] = [
  { title: "Viewport", size: "m", rows: [
    ["Title", "text", "Perspective", "l"],
    ["Width", "num", "542", "m"],
    ["Height", "num", "758", "m"],
    ["Projection", "select", "Perspective", "m"],
    ["Display mode", "select", "Shaded", "l"],
    ["Locked", "check", "", "l"],
  ] },
  { title: "Camera", size: "m", rows: [
    ["Lens Length (n", "num", "50.0", "m"],
    ["Rotation", "num", "0.0", "s"],
    ["X Location", "num", "25.486", "m"],
    ["Y Location", "num", "-40.970", "m"],
    ["Z Location", "num", "26.408", "m"],
    ["Distance to Ta", "text", "54.967", "s"],
    ["Location", "button", "Place...", "xl"],
  ] },
  { title: "Target", size: "xl", rows: [
    ["X Target", "num", "1.685", "s"],
    ["Y Target", "num", "0.256", "m"],
    ["Z Target", "num", "-1.076", "m"],
    ["Location", "button", "Place...", "xl"],
  ] },
  { title: "Wallpaper", size: "xl", rows: [
    ["Filename", "file", "(none)", "xl"],
    ["Show", "check", "on", "l"],
    ["Gray", "check", "on", "m"],
  ] },
];

@customElement("rhino-window")
export class RhinoWindow extends LitElement {
  @state() private tab = "Perspective";

  static styles = [base, css`
    :host {
      display: flex;
      flex-direction: column;
      background: #323232;
      color: #dcdcdc;
      border-top: 1px solid #5c5c5c;
      border-left: 1px solid #4a4a4a;
      border-bottom: 1px solid #707070;
      min-width: 0;
      overflow: hidden;
    }
    .title { display: flex; align-items: center; height: 18px; padding: 0 10px 0 4px; gap: 3px; background: #2d2d2d; flex: none; }
    .title span { flex: 1; }
    .title button { margin-left: 15px; color: #9a9a9a; }
    .menu { display: flex; gap: 9px; height: 12px; padding-left: 4px; background: #2d2d2d; flex: none; }
    .history { display: flex; height: 23px; background: #222; border-bottom: 1px solid #555; flex: none; padding: 2px 0 0 7px; }
    .history p { margin: 0; }
    .cmd { display: flex; align-items: center; height: 13px; background: #1f1f1f; flex: none; padding-left: 7px; font-weight: 700; color: #f2f2f2; }
    .cmd input { flex: 1; }
    .spin { width: 9px; height: 11px; border: 1px solid #888; background: #ddd; display: grid; gap: 1px; margin-right: 2px; }
    .spin button { background: #222; display: grid; place-items: center; }
    .tabs { display: flex; align-items: center; height: 13px; background: #484848; color: #858585; padding: 0 2px 0 7px; flex: none; }
    .tabs button { flex: 1 1 auto; height: 12px; }
    .tabs .on { background: #2f2f2f; color: #eee; border-radius: 2px 2px 0 0; padding: 0 2px; }
    .tools { display: flex; align-items: center; height: 22px; background: #2f2f2f; border-bottom: 1px solid #444; padding: 0 6px 3px; flex: none; }
    .tool { position: relative; flex: 1; display: grid; place-items: center; height: 17px; }
    .fly::after { content: ""; position: absolute; right: 0; bottom: 0; border: 2px solid; border-color: transparent #ddd #ddd transparent; border-width: 1px 1px 2px 2px; }
    .more { width: 14px; font-size: 9px; color: #aaa; }
    .body { flex: 1; display: grid; grid-template-columns: 76px minmax(0, 1fr) 131px; min-height: 0; }
    .left { border-right: 2px solid #4a4a4a; padding: 1px 2px 0 0; }
    .dots { text-align: center; color: #777; font-size: 8px; line-height: 4px; height: 5px; }
    .palette { display: grid; grid-template-columns: repeat(4, 1fr); grid-auto-rows: 1fr; height: 176px; margin-bottom: 17px; }
    .osnap { display: flex; justify-content: space-between; align-items: center; background: #3c3c3c; height: 12px; color: #999; padding: 0 1px 0 3px; }
    .snaptabs { display: grid; grid-template-columns: 22px 1fr; height: 12px; margin-bottom: 2px; }
    .snaptabs button { display: grid; place-items: center; }
    .snaptabs button + button { background: #434343; justify-content: start; padding-left: 6px; }
    .snap { display: flex; align-items: center; gap: 3px; height: 10px; padding-left: 2px; }
    .gap { margin-top: 10px; }
    input[type="checkbox"] { width: 8px; height: 8px; background: #555; border: 1px solid #777; display: grid; }
    input[type="checkbox"]:checked { background: #666; }
    input[type="checkbox"]:checked::after { content: ""; background: #fff; clip-path: polygon(0 50%, 18% 34%, 38% 58%, 84% 0, 100% 14%, 40% 100%); }
    .center { display: flex; flex-direction: column; min-width: 0; }
    .view { flex: 1; position: relative; background: #9ca2aa; min-height: 0; overflow: hidden; }
    .view > svg { width: 100%; height: 100%; }
    .badge { position: absolute; left: 0; top: 0; display: flex; height: 12px; background: #0a5bff; color: #fff; font-weight: 700; }
    .badge button { padding: 0 5px; }
    .badge button + button { padding: 0 2px; border-left: 1px solid #7fa8ff; line-height: 10px; }
    .arrow { display: block; border: 2px solid transparent; border-top: 3px solid #fff; border-bottom: 0; }
    .vtabs { display: flex; height: 14px; background: #484848; color: #909090; flex: none; padding-bottom: 1px; }
    .vtabs button { padding: 0 4px; border-right: 1px solid #5a5a4a; }
    .vtabs .on { background: #2e2e2e; color: #fff; padding: 0 5px; border: 1px solid #777; border-top: 0; }
    .vtabs .add { color: #fff; font-weight: 700; font-size: 10px; padding: 0 8px; border: 0; }
    .right { display: grid; grid-template-columns: minmax(0, 1fr) 14px; grid-template-rows: 12px 1fr; border-left: 1px solid #444; }
    .phead { grid-column: 1 / -1; display: flex; justify-content: space-between; align-items: center; color: #989898; padding: 0 3px; background: #363636; }
    .props { padding: 0 4px 0 3px; }
    .kinds { display: flex; gap: 2px; height: 29px; }
    .kinds button { width: 18px; height: 18px; display: grid; place-items: center; margin-top: 1px; }
    .kinds .on { background: #3a4f86; }
    h2 { margin: 0; font-size: 9px; font-weight: 400; display: flex; align-items: center; color: #eee; }
    .row { display: grid; grid-template-columns: 50px minmax(0, 1fr); padding-left: 10px; align-items: center; border-bottom: 1px solid #3f3f3f; }
    .row > span { white-space: nowrap; }
    .s { height: 12px; } .m { height: 13px; } .l { height: 14px; } .xl { height: 15px; }
    .field { display: flex; height: 11px; background: #555; border: 1px solid #6a6a6a; padding-left: 1px; align-items: center; }
    .field input { width: 100%; }
    .steps { display: grid; gap: 2px; padding: 0 2px; align-content: center; background: #3c3c3c; height: 100%; }
    .dn, .upp { width: 4px; height: 3px; background: #ddd; clip-path: polygon(0 0, 100% 0, 50% 100%); }
    .upp { clip-path: polygon(50% 0, 100% 100%, 0 100%); }
    select { width: 100%; height: 12px; background: #555; border: 1px solid #6a6a6a; padding: 0 8px 0 1px; }
    .pick { position: relative; }
    .pick::after { content: ""; position: absolute; right: 4px; top: 4px; width: 3px; height: 3px; border: solid #ddd; border-width: 0 1px 1px 0; transform: rotate(45deg); }
    .push { height: 13px; border: 1px solid #777; width: 100%; background: #2c2c2c; }
    .file { display: grid; grid-template-columns: 1fr 14px; height: 13px; border: 1px solid #777; color: #aaa; }
    .file input { background: #555; padding-left: 1px; width: 100%; }
    .side { background: #3e3e3e; }
    .side button { display: grid; place-items: center; width: 100%; height: 22px; padding-bottom: 1px; }
    .side button:nth-child(1) { background: #323232; }
    .status { display: grid; grid-template-columns: 23px 50fr 46fr 67fr 51fr 44fr 125fr 45fr 12fr 14px; align-items: center; height: 13px; flex: none; padding: 0 0 1px 4px; color: #c8c8c8; white-space: nowrap; }
    .swatch { width: 10px; height: 10px; background: #000; border: 1px solid #aaa; margin-right: 4px; }
    .layer { display: flex; align-items: center; }
  `];

  private tools(names: string[]) {
    return names.map((n) => {
      const key = n.replace("*", "");
      return html`<button class=${classMap({ tool: true, fly: n !== key })} aria-label=${key}>${icon(key, 15)}</button>`;
    });
  }

  private field([label, kind, value]: Row) {
    switch (kind) {
      case "text":
        return html`<span class="field"><input aria-label=${label} .value=${value}></span>`;
      case "num":
        return html`<span class="field"><input aria-label=${label} .value=${value}><span class="steps"><i class="upp"></i><i class="dn"></i></span></span>`;
      case "select":
        return html`<span class="pick"><select aria-label=${label}><option>${value}</option></select></span>`;
      case "check":
        return html`<input type="checkbox" aria-label=${label} .checked=${value === "on"}>`;
      case "button":
        return html`<button class="push">${value}</button>`;
      default:
        return html`<span class="file"><input aria-label=${label} .value=${value}><button>...</button></span>`;
    }
  }

  render() {
    return html`
      <div class="title">${icon("rhino", 11)}<span>Rhino 8 Educational - [Perspective]</span>
        <button aria-label="Minimize">${icon("min", 11)}</button>
        <button aria-label="Maximize">${icon("max", 11)}</button>
        <button aria-label="Close">${icon("close", 11)}</button>
      </div>
      <nav class="menu">${rhinoMenus.map((m) => html`<button>${m}</button>`)}</nav>
      <div class="history"><div><p>1 linear dimension added to selection.</p><p>Command: _Delete</p></div></div>
      <div class="cmd"><label for="cmd">Command:</label><input id="cmd">
        <span class="spin"><button aria-label="Older"></button><button aria-label="Newer"></button></span></div>
      <div class="tabs">${rhinoTabs.map((t, i) => html`<button class=${classMap({ on: i === 0 })}>${t}</button>`)}
        ${icon("gear", 8)}</div>
      <div class="tools">${this.tools(rhinoTools)}<button class="more">»</button></div>
      <div class="body">
        <div class="left">
          <div class="dots">····</div>
          <div class="palette">${this.tools(palette)}</div>
          <div class="osnap"><span>OSnap</span>${icon("gear", 8)}</div>
          <div class="snaptabs"><button aria-label="Persistent">${icon("end", 11)}</button><button aria-label="Filter">${icon("filter", 11)}</button></div>
          ${snaps.map((s) => html`<label class="snap"><input type="checkbox" checked>${s}</label>`)}
          <label class="snap"><input type="checkbox">Project</label>
          <label class="snap gap"><input type="checkbox">Disable</label>
        </div>
        <div class="center">
          <div class="view">
            <svg viewBox="0 0 ${VIEW.w} ${VIEW.h}" preserveAspectRatio="xMidYMid slice">
              <path d=${ground} fill="#9aa0a8"/>
              <path d=${minor} stroke="#848b92" stroke-width=".6" fill="none"/>
              <path d=${major} stroke="#7a8188" stroke-width=".8" fill="none"/>
              <path d=${segment([0, 0], [0, EXTENT])} stroke="#3d9a3d" fill="none"/>
              <path d=${segment([0, 0], [EXTENT, 0])} stroke="#a8484c" fill="none"/>
              <path d="M23 150L174 133L235 209L42 238Z" stroke="#a33035" fill="none"/>
              <ellipse cx="119" cy="177" rx="3" ry="1.500" fill="#a00c10"/>
              ${marks.map(([x, y]) => svg`<path d="M${x - 2} ${y - 2}l4 4m0 -4l-4 4" stroke="#9c0a0e" stroke-width="2.200"/>`)}
              <path d="M22 340V357L32 349M22 357L38 362" stroke="#6c7278" fill="none"/>
              <g font-size="8" fill="#686e74"><text x="23" y="342">z</text><text x="33" y="350">y</text><text x="40" y="363">x</text></g>
            </svg>
            <div class="badge"><button>Perspective</button><button aria-label="View menu"><span class="arrow"></span></button></div>
          </div>
          <div class="vtabs">${["Perspective", "Top", "Front", "Right"].map((t) => html`
            <button class=${classMap({ on: t === this.tab })} @click=${() => (this.tab = t)}>${t}</button>`)}<button class="add">+</button></div>
        </div>
        <div class="right">
          <div class="phead"><span>Properties: Viewport</span>${icon("gear", 8)}</div>
          <div class="props">
            <div class="kinds"><button class="on" aria-label="Viewport">${icon("camera")}</button>
              <button aria-label="Frame">${icon("frame", 15)}</button><button aria-label="Material">${icon("material", 15)}</button></div>
            ${sections.map((s) => html`<h2 class=${s.size}>${s.title}</h2>
              ${s.rows.map((r) => html`<div class="row ${r[3]}"><span>${r[0]}</span>${this.field(r)}</div>`)}`)}
          </div>
          <div class="side">${["layers", "wheel", "screen", "help", "bell"].map((n) => html`<button aria-label=${n}>${icon(n, 10)}</button>`)}</div>
        </div>
      </div>
      <div class="status">${icon("dockl", 10)}<span>CPlane</span><span>x 8'-3"</span><span>y 18'1-3/8"</span>
        <span>z 0</span><span>Inches</span><span class="layer"><i class="swatch"></i>Default</span>
        <span>Grid Snap</span><span>Ort</span>${icon("dockr", 10)}</div>
    `;
  }
}

/* ---------- Grasshopper window ---------- */

const ghTabs = "VCSMXTDRKERHPELLHLEDHVE".split("");
const ribbon = [
  { name: "Analysis", cols: [["g1", "g3"], ["g4", "g2"], "|", ["g5", "g6"], "|", ["g7", "g8"], "|", ["g9", "g10"]] },
  { name: "Division", cols: [["g11", "g12"], "|", ["g13", "g14"]] },
  { name: "Primitive", cols: [["g15", "g16"], "|", ["g17", "g18"], "|", ["g19", "g20"]] },
  { name: "Spline", cols: [["g21", "g22"], ["g23", "g24"], "|", ["g25", "g26"]] },
  { name: "Util", cols: [["g27", "g29"], ["g28", "g30"], "|", ["g31", "g32"]] },
];

@customElement("grasshopper-window")
export class GrasshopperWindow extends LitElement {
  @state() private value = 0.5;

  static styles = [base, css`
    :host {
      display: flex;
      flex-direction: column;
      background: #f0f0f0;
      color: #222;
      border-left: 2px solid #777;
      border-top: 1px solid #9aa;
      min-width: 0;
      overflow: hidden;
    }
    .title { display: flex; align-items: center; height: 18px; padding: 0 9px 0 3px; background: linear-gradient(90deg, #f0f3f8, #e6f3f8); flex: none; }
    .title span { flex: 1; }
    .title button { margin-left: 18px; }
    .menu { display: flex; align-items: center; gap: 12px; height: 19px; padding: 0 5px 0 6px; background: #fafafa; flex: none; }
    .menu span { margin-left: auto; }
    .tabs { display: flex; align-items: end; height: 13px; color: #707070; flex: none; background: #f3f3f3; }
    .tabs button { height: 13px; }
    .words { display: flex; gap: 11px; width: 72px; padding-left: 3px; flex: none; }
    .letters { flex: 1; display: grid; grid-auto-flow: column; grid-auto-columns: minmax(0, 1fr); padding-right: 2px; }
    .letters .on { background: #fdfdfd; border: 1px solid #999; border-bottom: 0; border-radius: 3px 3px 0 0; color: #111; }
    .ribbon { display: flex; gap: 3px; height: 55px; padding: 1px 0 0; background: linear-gradient(#d8d8d8, #ededed 60%, #f2f2f2); border-top: 1px solid #aaa; border-bottom: 1px solid #888; flex: none; border-radius: 0 3px 0 0; }
    .group { display: flex; flex-direction: column; height: 46px; border: 1px solid #aaa; border-radius: 3px; overflow: hidden; background: linear-gradient(#ddd, #e6e6e6 50%, #d2d2d2); }
    .cols { flex: 1; display: flex; align-items: center; padding: 0 1px; gap: 1px; }
    .col { display: grid; gap: 1px; }
    .col button { width: 16px; height: 17px; display: grid; place-items: center; }
    .bar { width: 1px; height: 28px; background: #b2b2b2; margin: 0 2px; }
    .foot { display: grid; grid-template-columns: 8px 1fr 8px; height: 9px; line-height: 8px; background: #151515; color: #ddd; text-align: center; }
    .foot::before { content: ""; }
    .tools { display: flex; align-items: center; height: 19px; background: #fcfcfc; border-bottom: 1px solid #ddd; flex: none; padding: 0 0 0 1px; }
    .tools button { display: grid; place-items: center; width: 17px; height: 17px; }
    .tools .hot { border: 1px solid #4a9fc8; background: #dcebf2; }
    .vr { width: 1px; height: 13px; background: #ccc; margin: 0 3px; }
    .tight { margin: 0 1px; }
    .sep { flex: 1; }
    .dot { width: 2px; height: 2px; background: #222; margin: 0 3px; }
    .zoom { width: 90px; height: 15px; border: 1px solid #b5b5b5; padding-left: 1px; font-size: 8px; background: #fff; }
    .pick { position: relative; margin-right: 3px; }
    .pick::after { content: ""; position: absolute; right: 4px; top: 5px; width: 3px; height: 3px; border: solid #777; border-width: 0 1px 1px 0; transform: rotate(45deg); }
    .canvas { position: relative; flex: 1; background: #d4d0c8; overflow: hidden; min-height: 0; font-size: 8px; color: #2a2a2a; }
    .wires { position: absolute; inset: 0; width: 100%; height: 100%; }
    .beyond { position: absolute; left: 0; right: 0; top: 0; height: 80px; background: linear-gradient(#cdc9c1 60%, #bfbbb4 80%, #8b8883); border-bottom: 1px solid #444; }
    .node { position: absolute; display: grid; border: 1px solid #6a6a6a; border-radius: 3px; background: linear-gradient(#f3f3f3, #d8d8d8 50%, #c2c2c2); box-shadow: 0 1px 2px #0005; line-height: 14px; }
    .ins { text-align: right; }
    .explode { left: 25px; top: 193px; width: 109px; height: 34px; grid-template-columns: 40px 24px 1fr; align-items: center; }
    .node svg { justify-self: center; }
    .evaluate { left: 308px; top: 195px; width: 117px; height: 48px; grid-template-columns: 13px 41px 23px 1fr; align-items: center; }
    .evaluate svg:first-child { align-self: start; margin-top: 7px; }
    .evaluate .ins { line-height: 22px; }
    .tag { position: absolute; background: #f6f6f6; border: 1px solid #777; padding: 0 3px; line-height: 12px; box-shadow: 0 1px 2px #0004; }
    .tag::after { content: ""; position: absolute; left: 50%; top: 100%; margin-left: -4px; border: 4px solid transparent; border-top-color: #777; border-bottom: 0; }
    .t1 { left: 61px; top: 169px; }
    .t2 { left: 336px; top: 170px; }
    .panel { position: absolute; left: 186px; top: 113px; width: 118px; height: 75px; border: 1px solid #6a6a3a; border-radius: 3px; overflow: hidden; box-shadow: 0 1px 2px #0005; background: #fdf650; }
    .panel h3 { margin: 0; height: 14px; line-height: 13px; font-size: 8px; font-weight: 400; text-align: center; background: #cbc94a; border-bottom: 1px solid #77752a; }
    .panel p { margin: 0; height: 12px; line-height: 12px; text-align: right; padding-right: 9px; background: #d8d44c; font-family: "Liberation Mono", monospace; }
    .panel ol { margin: 0; padding: 0; list-style: none; font-family: "Liberation Mono", monospace; }
    .panel li { display: grid; grid-template-columns: 9px 1fr; gap: 0; height: 12px; line-height: 12px; padding-left: 3px; }
    .panel li:nth-child(even) { background: #f0ea50; }
    .scroll { position: absolute; right: 1px; top: 14px; width: 5px; bottom: 1px; border-radius: 2px; background: #8f8c2c; }
    .slider { position: absolute; left: 144px; top: 278px; width: 151px; height: 15px; display: grid; grid-template-columns: 61px 1fr; border: 1px solid #666; border-radius: 3px; background: linear-gradient(#f4f4f4, #cfcfcf); line-height: 13px; box-shadow: 0 1px 2px #0005; }
    .slider label { background: linear-gradient(#b4b3c4, #8f8ea0); border-right: 1px solid #666; text-align: center; border-radius: 2px 0 0 2px; }
    .track { display: grid; align-items: center; padding: 0 6px; }
    .track > * { grid-area: 1 / 1; }
    .track output { padding-left: 21px; pointer-events: none; }
    .track input { width: 100%; height: 13px; background: linear-gradient(#bbb, #bbb) center / 100% 1px no-repeat; }
    .track input::-webkit-slider-thumb { appearance: none; width: 6px; height: 6px; border: 2px solid #111; border-radius: 50%; background: #fff; }
    .dock { position: absolute; left: 0; bottom: 0; display: flex; align-items: center; gap: 4px; height: 18px; width: 92px; padding: 0 2px; border: 1px solid #666; border-right: 4px solid #888; background: linear-gradient(#e8e8e8, #a8a8a8); }
    .dock button { display: grid; place-items: center; }
    .compass { position: absolute; right: 5px; bottom: 4px; width: 34px; height: 30px; }
    .status { display: flex; justify-content: space-between; align-items: center; height: 15px; background: #f0f0f0; flex: none; padding: 2px 20px 0 4px; color: #666; border-bottom: 1px solid #999; }
  `];

  private grid() {
    const lines = [];
    for (let x = 75; x < 2400; x += 110.5) lines.push(`M${x} 0V2400`);
    for (let y = 5; y < 2400; y += 36.75) lines.push(`M0 ${y}H2400`);
    return lines.join("");
  }

  render() {
    const ports = [[26, 202], [26, 217], [134, 202], [134, 217], [186, 150], [304, 150], [308, 208], [308, 230],
      [425, 204], [425, 219], [425, 234], [295, 285]];
    const wires = ["M134 202C160 202 158 150 186 150", "M134 202C200 202 240 208 308 208"];
    return html`
      <div class="title"><span>Grasshopper - unnamed</span>
        <button aria-label="Minimize">${icon("min", 11)}</button>
        <button aria-label="Maximize">${icon("max", 11)}</button>
        <button aria-label="Close">${icon("close", 11)}</button></div>
      <nav class="menu">${["File", "Edit", "View", "Display", "Solution", "Help"].map((m) => html`<button>${m}</button>`)}<span>unnamed</span></nav>
      <div class="tabs"><div class="words"><button>Prm</button><button>Math</button><button>Set</button></div>
        <div class="letters">${ghTabs.map((t, i) => html`<button class=${classMap({ on: i === 1 })}>${t}</button>`)}</div></div>
      <div class="ribbon">${ribbon.map((g) => html`<section class="group"><div class="cols">
        ${g.cols.map((c) => c === "|" ? html`<i class="bar"></i>` : html`<div class="col">${(c as string[]).map((n) => html`<button aria-label=${g.name}>${icon(n, 15)}</button>`)}</div>`)}
        </div><div class="foot"><span>${g.name}</span><span>+</span></div></section>`)}</div>
      <div class="tools"><button aria-label="Open">${icon("gopen", 14)}</button><button aria-label="Save">${icon("gsave", 15)}</button>
        <i class="vr tight"></i><span class="pick"><select class="zoom" aria-label="Zoom"><option>147%</option></select></span>
        <button aria-label="Zoom extents">${icon("extents", 14)}</button><i class="dot"></i>
        <button aria-label="Views">${icon("eye", 15)}</button><i class="dot"></i>
        <button aria-label="Sketch">${icon("sketch", 15)}</button><span class="sep"></span>
        <button aria-label="No preview">${icon("ghost", 14)}</button><button aria-label="Wireframe">${icon("wirecan", 14)}</button>
        <button class="hot" aria-label="Shaded">${icon("redcan", 15)}</button><i class="vr"></i>
        <button aria-label="Meshes">${icon("tealcan", 14)}</button><button aria-label="Selected">${icon("greencan", 14)}</button>
        <button aria-label="Document">${icon("half", 14)}</button><i class="vr tight"></i>
        <button aria-label="Quality">${icon("bluesphere", 14)}</button><i class="dot"></i></div>
      <div class="canvas">
        <div class="beyond"></div>
        <svg class="wires">
          <path d=${this.grid()} stroke="#000" stroke-opacity=".11" fill="none"/>
          ${wires.map((d) => svg`<path d=${d} stroke="#4a4a4a" stroke-width="3.400" fill="none"/><path d=${d} stroke="#c8c5be" stroke-width="1" fill="none"/>`)}
          <path d="M0 202H26" stroke="#444" stroke-width="1.600"/>
          <path d="M295 285C326 285 280 230 308 230" stroke="#4a4a4a" stroke-width="2" fill="none"/>
          ${ports.map(([x, y]) => svg`<circle cx=${x} cy=${y} r="2.500" fill="#fff" stroke="#111" stroke-width="1.200"/>`)}
        </svg>
        <div class="tag t1">Explode</div>
        <div class="tag t2">Evaluate Curve</div>
        <div class="node explode"><div class="ins">Curve<br>Recursive</div>${icon("explode", 15)}<div>Segments<br>Vertices</div></div>
        <div class="node evaluate">${icon("bump", 12)}<div class="ins">Curve<br>Parameter</div>${icon("evalc", 17)}<div>Point<br>Tangent<br>Angle</div></div>
        <div class="panel"><h3>Panel</h3><p>{0;0}</p><ol>${[0, 1, 2, 3].map((i) => html`<li><span>${i}</span><span>Line-like Curve</span></li>`)}</ol><i class="scroll"></i></div>
        <div class="slider"><label for="num">Number Slider</label><div class="track">
          <input id="num" type="range" min="0" max="1" step="0.1" .value=${String(this.value)}
            @input=${(e: Event) => (this.value = Number((e.target as HTMLInputElement).value))}>
          <output>${this.value}</output></div></div>
        <div class="dock">${["b1", "b2", "b3", "b4", "b5"].map((n) => html`<button aria-label=${n}>${icon(n, 13)}</button>`)}</div>
        <svg class="compass" viewBox="0 0 34 30">
          <path d="M1 8l5-1 4 2 2-5 5-3v3l-5 7-3 2-6-3z" fill="#111"/>
          <circle cx="20" cy="16" r="12.500" fill="#c4c4c4" stroke="#777"/>
          <circle cx="20" cy="16" r="9.500" fill="#dcdcdc" stroke="#aaa" stroke-width=".7"/>
          <circle cx="19" cy="14" r="5" fill="#ececec"/>
          <path d="M22 4l3 1-2 3zM31 18l-1 3-3-2zM18 28l-3-1 2-3zM9 14l1-3 3 2z" fill="#fff"/>
        </svg>
      </div>
      <div class="status"><span>...</span><span>1.0.0008</span></div>
    `;
  }
}

/* ---------- taskbar ---------- */

const apps = ["windows", "search", "task", "copilot", "teams", "folder*", "edge", "outlook", "calc", "chromeA*", "rhinoB",
  "remote", "chromeB*", "snip*", "settings*", "vscode*", "chrome*", "keyb*", "green*", "Ai*", "photo*", "acrobat*", "rhino8*"];

@customElement("task-bar")
export class TaskBar extends LitElement {
  static styles = [base, css`
    :host { display: grid; grid-template-columns: 640fr 319fr; height: 29px; color: #fff; background: linear-gradient(90deg, #142524, #1b2914 12%, #182b12 40%, #1a2916 60%, #162b24 82%, #172a12); }
    .apps { display: grid; grid-auto-flow: column; grid-auto-columns: minmax(0, 1fr); padding-left: 6px; }
    .app { display: grid; place-items: center; position: relative; }
    .run::after { content: ""; position: absolute; bottom: 1px; left: 50%; margin-left: -2px; width: 4px; height: 2px; border-radius: 1px; background: #a8b0a8; }
    .act { background: #2c3a2a; border-radius: 3px; margin: 2px 1px; padding: 0; }
    .act::after { bottom: -1px; width: 10px; margin-left: -5px; background: #9cc4dc; }
    .ai { width: 15px; height: 14px; background: #330500; color: #ff9a1a; font-size: 8px; font-weight: 700; border-radius: 2px; display: grid; place-items: center; }
    .eight { position: absolute; right: 4px; top: 3px; font-size: 7px; line-height: 8px; }
    .tray { display: flex; justify-content: flex-end; align-items: center; padding-right: 11px; gap: 1px; }
    .tray button { display: flex; align-items: center; justify-content: center; }
    .weather { position: relative; margin-right: 8px; }
    .weather span { position: absolute; left: 7px; top: -3px; line-height: 8px; }
    .lang { display: block; text-align: center; width: 30px; }
    .clock { text-align: right; width: 42px; }
    .gap { width: 20px; }
    .batt { width: 12px; height: 8px; border: 1px solid #fff; border-radius: 2px; background: #7ed088; margin: 0 3px; }
    .txt { font-size: 8px; line-height: 11px; }
  `];

  render() {
    return html`
      <div class="apps">${apps.map((n) => {
        const key = n.replace("*", "");
        const art = key === "Ai" ? html`<span class="ai">Ai</span>`
          : key === "rhino8" ? html`${icon("rhinoB", 15)}<span class="eight">8</span>` : icon(key, 15);
        return html`<button class=${classMap({ app: true, run: n !== key, act: key === "rhino8" })} aria-label=${key}>${art}</button>`;
      })}</div>
      <div class="tray">
        <button class="weather">${icon("moon", 15)}<span>68°</span></button>
        <button class="gap" aria-label="Hidden icons">${icon("up", 11)}</button>
        <button class="gap" aria-label="Cloud">${icon("cloud", 12)}</button>
        <button class="txt"><span class="lang">ENG<br>US</span></button>
        <button aria-label="Network">${icon("wifi", 14)}</button>
        <button aria-label="Volume">${icon("sound", 14)}</button>
        <button aria-label="Battery"><i class="batt"></i></button>
        <button class="txt"><span class="clock">8:28 pm<br>10/2/2026</span></button>
      </div>`;
  }
}

@customElement("app-root")
export class AppRoot extends LitElement {
  static styles = css`
    :host { display: grid; grid-template-rows: minmax(0, 1fr) auto; height: 100vh; overflow: hidden; }
    .windows { display: grid; grid-template-columns: minmax(0, 480fr) minmax(0, 479fr); min-height: 0; }
  `;
  render() {
    return html`<div class="windows"><rhino-window></rhino-window><grasshopper-window></grasshopper-window></div><task-bar></task-bar>`;
  }
}
